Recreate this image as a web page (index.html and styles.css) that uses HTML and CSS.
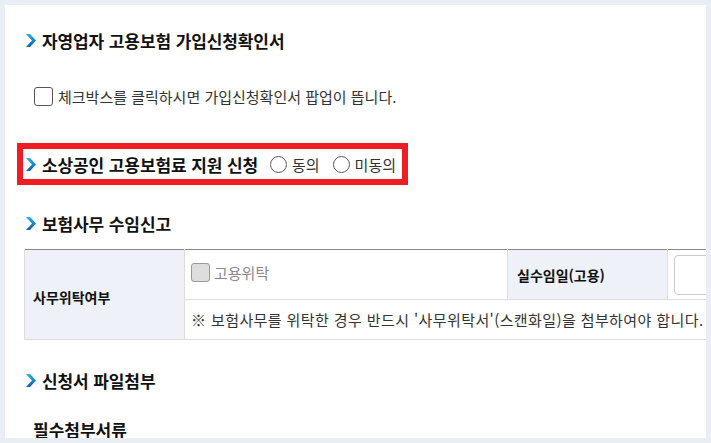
FILE: index.html
```html
<!DOCTYPE html>
<html lang="ko">
<head>
    <meta charset="UTF-8">
    <meta name="viewport" content="width=device-width, initial-scale=1.0">
    <title>고용보험 가입신청</title>
    <link rel="stylesheet" href="styles.css">
</head>
<body>
    <div class="panel">
        <h2 class="sec-title first">
            <svg class="chev" viewBox="0 0 10 13"><defs><linearGradient id="g1" x1="0" y1="0" x2="0" y2="1"><stop offset="0" stop-color="#22b0ea"/><stop offset="1" stop-color="#0b5cb0"/></linearGradient></defs><polygon points="0,0 4,0 10,6.5 4,13 0,13 6,6.5" fill="url(#g1)"/></svg>
            자영업자 고용보험 가입신청확인서
        </h2>
        <label class="check-line">
            <span class="box"></span>
            체크박스를 클릭하시면 가입신청확인서 팝업이 뜹니다.
        </label>

        <div class="highlight">
            <h2 class="sec-title inline">
                <svg class="chev" viewBox="0 0 10 13"><polygon points="0,0 4,0 10,6.5 4,13 0,13 6,6.5" fill="url(#g1)"/></svg>
                소상공인 고용보험료 지원 신청
            </h2>
            <label class="radio"><span class="circle"></span>동의</label>
            <label class="radio"><span class="circle"></span>미동의</label>
        </div>

        <h2 class="sec-title">
            <svg class="chev" viewBox="0 0 10 13"><polygon points="0,0 4,0 10,6.5 4,13 0,13 6,6.5" fill="url(#g1)"/></svg>
            보험사무 수임신고
        </h2>
        <table class="form-table">
            <colgroup>
                <col class="c-head">
                <col class="c-val">
                <col class="c-head">
                <col class="c-input">
            </colgroup>
            <tr class="row-a">
                <th rowspan="2">사무위탁여부</th>
                <td><span class="check-off"><span class="box gray"></span>고용위탁</span></td>
                <th class="pad">실수임일(고용)</th>
                <td><div class="text-input"></div></td>
            </tr>
            <tr class="row-b">
                <td colspan="3" class="note">※ 보험사무를 위탁한 경우 반드시 '사무위탁서'(스캔화일)을 첨부하여야 합니다.</td>
            </tr>
        </table>

        <h2 class="sec-title">
            <svg class="chev" viewBox="0 0 10 13"><polygon points="0,0 4,0 10,6.5 4,13 0,13 6,6.5" fill="url(#g1)"/></svg>
            신청서 파일첨부
        </h2>
        <h3 class="sub-title">필수첨부서류</h3>
    </div>
</body>
</html>
```

FILE: styles.css
```css
body {
    margin: 0;
    background-color: #e9edf4;
    font-family: "Noto Sans CJK KR", "Noto Sans", sans-serif;
    color: #333;
}
.panel {
    margin: 5px;
    height: 433px;
    background: #fff;
    overflow: hidden;
    padding-left: 21px;
}
.sec-title {
    display: flex;
    align-items: center;
    gap: 6px;
    margin: 0;
    height: 24px;
    font-size: 17px;
    font-weight: bold;
    color: #111;
    letter-spacing: -0.1px;
    white-space: nowrap;
}
.sec-title.first {
    margin-top: 23px;
}
.chev {
    width: 10px;
    height: 13px;
    flex: none;
}
.check-line {
    display: flex;
    align-items: center;
    gap: 5px;
    margin: 32px 0 0 8px;
    height: 24px;
    font-size: 15px;
    color: #333;
}
.box {
    display: inline-block;
    width: 17px;
    height: 17px;
    border: 1px solid #555;
    border-radius: 3px;
    background: #fff;
    flex: none;
}
.box.gray {
    background: #ddd;
    border-color: #999;
}
.highlight {
    display: flex;
    align-items: center;
    box-sizing: border-box;
    margin: 35px 0 0 -9px;
    width: 391px;
    height: 42px;
    border: 6px solid #ee1c25;
    padding-left: 3px;
    font-size: 15px;
    white-space: nowrap;
}
.sec-title.inline {
    flex: none;
    margin-right: 12px;
}
.radio {
    display: flex;
    flex: none;
    align-items: center;
    gap: 5px;
    margin-right: 13px;
    color: #333;
}
.circle {
    width: 15px;
    height: 15px;
    border: 1px solid #555;
    border-radius: 50%;
}
.highlight + .sec-title {
    margin-top: 26px;
}
.form-table {
    margin: 14px 0 0 -2px;
    width: 720px;
    table-layout: fixed;
    border-collapse: collapse;
    border-top: 1px solid #888;
    font-size: 15px;
}
.c-head { width: 160px; }
.c-val { width: 323px; }
.form-table th {
    background: #eef1f7;
    border: 1px solid #ddd;
    border-top: none;
    font-size: 14px;
    font-weight: bold;
    color: #111;
    text-align: left;
    padding: 4px 8px 0;
}
.form-table th.pad {
    padding: 0 9px;
}
.form-table td {
    border: 1px solid #ddd;
    border-top: none;
    padding: 0 6px;
}
.row-a {
    height: 50px;
}
.row-a td {
    border-bottom: 1px solid #ddd;
}
.row-b {
    height: 40px;
}
.check-off {
    display: flex;
    align-items: center;
    gap: 4px;
    margin-top: -5px;
    color: #888;
}
.text-input {
    height: 38px;
    border: 1px solid #ccc;
    border-radius: 4px;
}
.note {
    color: #333;
    white-space: nowrap;
    letter-spacing: 0.4px;
}
.form-table + .sec-title {
    margin-top: 28px;
}
.sub-title {
    margin: 26px 0 0 7px;
    font-size: 17px;
    font-weight: bold;
    color: #111;
    line-height: 24px;
}
```
